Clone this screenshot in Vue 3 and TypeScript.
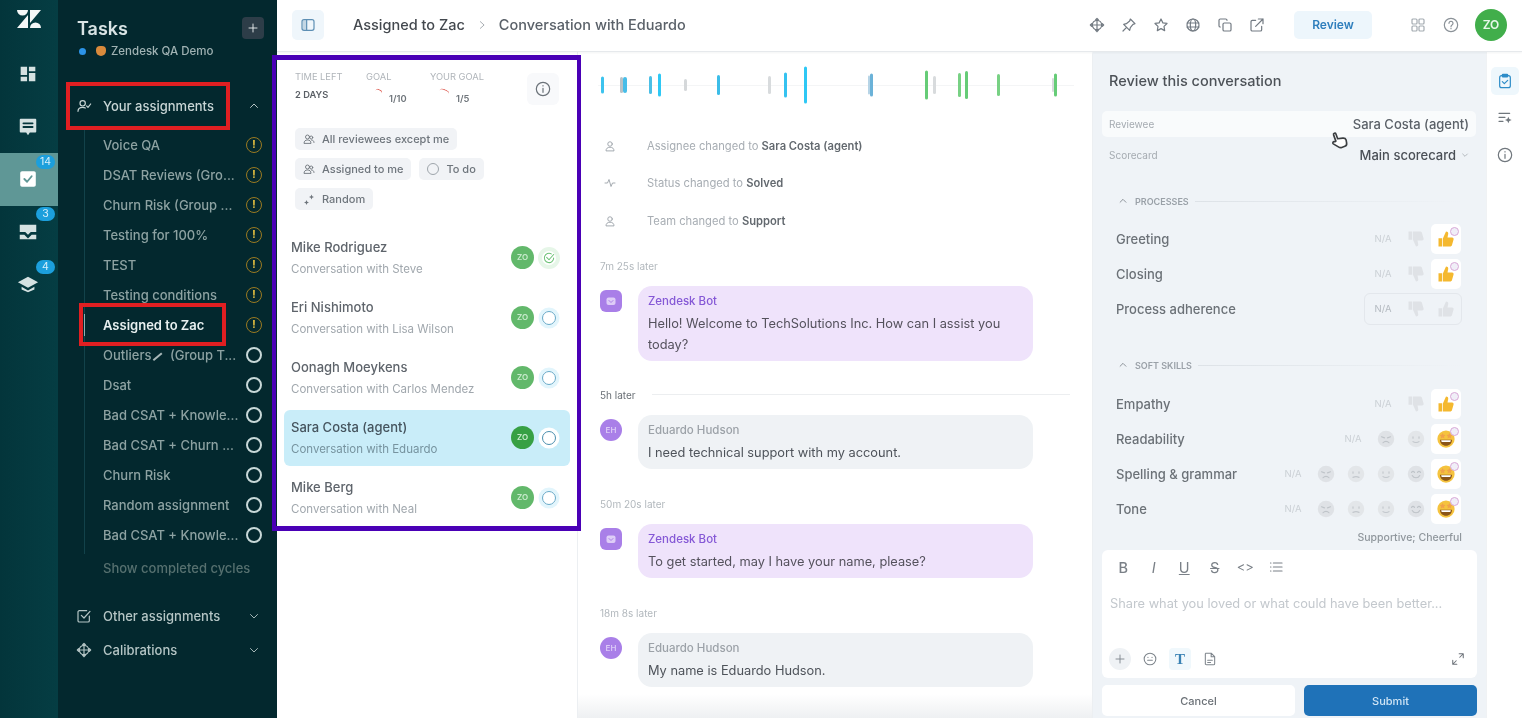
<script setup lang="ts">
const railItems = [
  { icon: 'r-dash', badge: '', active: false },
  { icon: 'r-chat', badge: '', active: false },
  { icon: 'r-task', badge: '14', active: true },
  { icon: 'r-tray', badge: '3', active: false },
  { icon: 'r-cap', badge: '4', active: false },
]

const assignments = [
  { name: 'Voice QA', warn: true },
  { name: 'DSAT Reviews (Gro...', warn: true },
  { name: 'Churn Risk (Group ...', warn: true },
  { name: 'Testing for 100%', warn: true },
  { name: 'TEST', warn: true },
  { name: 'Testing conditions', warn: true },
  { name: 'Assigned to Zac', warn: true, current: true },
  { name: 'Outliers', extra: '(Group T...', warn: false },
  { name: 'Dsat', warn: false },
  { name: 'Bad CSAT + Knowle...', warn: false },
  { name: 'Bad CSAT + Churn ...', warn: false },
  { name: 'Churn Risk', warn: false },
  { name: 'Random assignment', warn: false },
  { name: 'Bad CSAT + Knowle...', warn: false },
]

const reviews = [
  { name: 'Mike Rodriguez', sub: 'Conversation with Steve', done: true },
  { name: 'Eri Nishimoto', sub: 'Conversation with Lisa Wilson' },
  { name: 'Oonagh Moeykens', sub: 'Conversation with Carlos Mendez' },
  { name: 'Sara Costa (agent)', sub: 'Conversation with Eduardo', selected: true },
  { name: 'Mike Berg', sub: 'Conversation with Neal' },
]

const bars = [
  { x: 601, w: 3, h: 17, c: '#3cc3ee' },
  { x: 620, w: 3, h: 16, c: '#b9c2c7' },
  { x: 623, w: 4, h: 16, c: '#47bde8' },
  { x: 649, w: 3, h: 18, c: '#4bbfe6' },
  { x: 658, w: 3, h: 23, c: '#2ec8f5' },
  { x: 684, w: 3, h: 12, c: '#d5d8da' },
  { x: 717, w: 3, h: 20, c: '#3cbde8' },
  { x: 768, w: 3, h: 18, c: '#d8dbdd' },
  { x: 784, w: 3, h: 25, c: '#35c2f0' },
  { x: 804, w: 3, h: 37, c: '#2ec8f5' },
  { x: 868, w: 2, h: 19, c: '#b6d4e6' },
  { x: 870, w: 3, h: 23, c: '#6bb2d8' },
  { x: 925, w: 3, h: 29, c: '#66cc77' },
  { x: 933, w: 3, h: 18, c: '#d8dbdd' },
  { x: 958, w: 3, h: 24, c: '#78d184' },
  { x: 965, w: 3, h: 28, c: '#66cc77' },
  { x: 997, w: 3, h: 22, c: '#78d184' },
  { x: 1052, w: 2, h: 14, c: '#d8dbdd' },
  { x: 1054, w: 3, h: 23, c: '#66cc77' },
]

const messages = [
  { gap: '7m 25s later', bot: true, text: 'Hello! Welcome to TechSolutions Inc. How can I assist you today?' },
  { gap: '5h later', strong: true, bot: false, text: 'I need technical support with my account.' },
  { gap: '50m 20s later', bot: true, text: 'To get started, may I have your name, please?' },
  { gap: '18m 8s later', bot: false, text: 'My name is Eduardo Hudson.' },
]

const processRows = [
  { name: 'Greeting' },
  { name: 'Closing' },
  { name: 'Process adherence', open: true },
]

const softRows = [
  { name: 'Empathy', faces: [] as string[], thumb: true },
  { name: 'Readability', faces: ['f-sad', 'f-ok'] },
  { name: 'Spelling & grammar', faces: ['f-sad', 'f-meh', 'f-ok', 'f-wink'] },
  { name: 'Tone', faces: ['f-sad', 'f-meh', 'f-ok', 'f-wink'] },
]

const topIcons = ['i-target', 'i-pin', 'i-star', 'i-globe', 'i-copy', 'i-out']
</script>

<template>
  <div class="screen">
    <svg class="defs" aria-hidden="true">
      <symbol id="logo" viewBox="0 0 24 18">
        <path d="M0 0H11A5.5 5.5 0 0 1 0 0ZM13 0H24L13 13ZM11 5V18H0ZM13 18A5.5 5.5 0 0 1 24 18Z" fill="currentColor" />
      </symbol>
      <symbol id="r-dash" viewBox="0 0 24 24">
        <path d="M4 4h7v9H4zM13 4h7v5h-7zM13 11h7v9h-7zM4 15h7v5H4z" fill="currentColor" />
      </symbol>
      <symbol id="r-chat" viewBox="0 0 24 24">
        <path d="M4 3h16a1 1 0 0 1 1 1v13a1 1 0 0 1-1 1h-6l-2 3-2-3H4a1 1 0 0 1-1-1V4a1 1 0 0 1 1-1z" fill="currentColor" />
        <path d="M7 8h10M7 12h10" stroke="#04363c" stroke-width="2" fill="none" />
      </symbol>
      <symbol id="r-task" viewBox="0 0 24 24">
        <rect x="3.500" y="3.500" width="17" height="17" rx="2" fill="#fff" />
        <path d="M8 12l3 3 5-6" stroke="#5f9796" stroke-width="2" fill="none" />
      </symbol>
      <symbol id="r-tray" viewBox="0 0 24 24">
        <path d="M3 4h18v8h-6l-3 3-3-3H3zM3 15h5l4 4 4-4h5v5H3z" fill="currentColor" />
      </symbol>
      <symbol id="r-cap" viewBox="0 0 24 24">
        <path d="M12 4L1 10l11 6 11-6zM5 15v3l7 3 7-3v-3l-7 4z" fill="currentColor" />
      </symbol>
      <symbol id="i-assign" viewBox="0 0 24 24">
        <circle cx="10" cy="8" r="4" />
        <path d="M3 20c0-4 3-6 7-6 2 0 3 .4 4 1M16 12l2 2 4-5" />
      </symbol>
      <symbol id="i-check-box" viewBox="0 0 24 24">
        <path d="M20 12v7a2 2 0 0 1-2 2H5a2 2 0 0 1-2-2V6a2 2 0 0 1 2-2h11" />
        <path d="M8 11l4 4 9-10" />
      </symbol>
      <symbol id="i-target" viewBox="0 0 24 24">
        <circle cx="12" cy="12" r="7" />
        <path d="M12 2v20M2 12h20M10 4l2-2 2 2M10 20l2 2 2-2M4 10l-2 2 2 2M20 10l2 2-2 2" />
      </symbol>
      <symbol id="i-pin" viewBox="0 0 24 24">
        <path d="M14 3l7 7-3 1-4 5-1 4-9-9 4-1 5-4zM8 16l-5 5" />
      </symbol>
      <symbol id="i-star" viewBox="0 0 24 24">
        <path d="M12 3l2.8 5.8 6.2.9-4.5 4.4 1 6.3-5.500-3-5.500 3 1-6.300L3 9.700l6.200-.9z" />
      </symbol>
      <symbol id="i-globe" viewBox="0 0 24 24">
        <circle cx="12" cy="12" r="9" />
        <ellipse cx="12" cy="12" rx="4" ry="9" />
        <path d="M3 9h18M3 15h18" />
      </symbol>
      <symbol id="i-copy" viewBox="0 0 24 24">
        <rect x="9" y="9" width="12" height="12" rx="2" />
        <path d="M15 5V5a2 2 0 0 0-2-2H5a2 2 0 0 0-2 2v8a2 2 0 0 0 2 2" />
      </symbol>
      <symbol id="i-out" viewBox="0 0 24 24">
        <path d="M19 14v5a2 2 0 0 1-2 2H5a2 2 0 0 1-2-2V7a2 2 0 0 1 2-2h5M14 3h7v7M21 3L10 14" />
      </symbol>
      <symbol id="i-grid" viewBox="0 0 24 24">
        <rect x="3" y="3" width="7.500" height="7.500" rx="1.500" />
        <rect x="13.500" y="3" width="7.500" height="7.500" rx="1.500" />
        <rect x="3" y="13.500" width="7.500" height="7.500" rx="1.500" />
        <rect x="13.500" y="13.500" width="7.500" height="7.500" rx="1.500" />
      </symbol>
      <symbol id="i-help" viewBox="0 0 24 24">
        <circle cx="12" cy="12" r="10" />
        <path d="M9 9.500a3 3 0 1 1 4.500 2.600c-1 .6-1.500 1.200-1.500 2.400M12 17v.5" />
      </symbol>
      <symbol id="i-info" viewBox="0 0 24 24">
        <circle cx="12" cy="12" r="10" />
        <path d="M12 11v6M12 7v.5" />
      </symbol>
      <symbol id="i-panel" viewBox="0 0 24 24">
        <rect x="3" y="4" width="18" height="16" rx="3" />
        <path d="M10 4v16" />
        <path d="M4 5h6v14H4z" fill="currentColor" opacity=".3" stroke="none" />
      </symbol>
      <symbol id="i-people" viewBox="0 0 24 24">
        <circle cx="9" cy="8" r="4" />
        <circle cx="16.500" cy="9" r="3" />
        <path d="M2 20c0-4 3-6 7-6s7 2 7 6zM17 14c3 0 5 2 5 5" />
      </symbol>
      <symbol id="i-spark" viewBox="0 0 24 24">
        <path d="M17 3l1.500 3.500L22 8l-3.500 1.500L17 13l-1.500-3.500L12 8l3.500-1.500zM7 14l1.500 3.500L12 19l-3.500 1.500L7 24l-1.500-3.500L2 19l3.500-1.500z" fill="currentColor" stroke="none" />
      </symbol>
      <symbol id="i-user" viewBox="0 0 24 24">
        <circle cx="12" cy="8" r="4.500" />
        <path d="M4 21c0-4 3-6.500 8-6.500s8 2.500 8 6.500z" />
      </symbol>
      <symbol id="i-pulse" viewBox="0 0 24 24">
        <path d="M2 12h5l3-7 4 14 3-7h5" />
      </symbol>
      <symbol id="i-chev-up" viewBox="0 0 24 24">
        <path d="M5 15l7-7 7 7" />
      </symbol>
      <symbol id="i-chev-down" viewBox="0 0 24 24">
        <path d="M5 9l7 7 7-7" />
      </symbol>
      <symbol id="i-chev-right" viewBox="0 0 24 24">
        <path d="M8 4l9 8-9 8" />
      </symbol>
      <symbol id="i-plus" viewBox="0 0 24 24">
        <path d="M12 4v16M4 12h16" />
      </symbol>
      <symbol id="i-clip" viewBox="0 0 24 24">
        <rect x="4" y="4" width="16" height="18" rx="3" />
        <rect x="8" y="2" width="8" height="4" rx="1" fill="currentColor" />
        <path d="M8 13l3 3 5-5" />
      </symbol>
      <symbol id="i-addlist" viewBox="0 0 24 24">
        <path d="M3 5h16M3 11h9M3 17h6" />
        <path d="M17 10l1.500 3.500L22 15l-3.500 1.500L17 20l-1.500-3.500L12 15l3.500-1.500z" fill="currentColor" stroke="none" />
      </symbol>
      <symbol id="i-smile" viewBox="0 0 24 24">
        <circle cx="12" cy="12" r="10" />
        <path d="M8 14h8M8.500 9v.5M15.500 9v.5" />
      </symbol>
      <symbol id="i-doc" viewBox="0 0 24 24">
        <path d="M5 2h9l6 6v12a2 2 0 0 1-2 2H6a2 2 0 0 1-2-2V3zM14 2v6h6M8 14h8M8 18h5" />
      </symbol>
      <symbol id="i-list" viewBox="0 0 24 24">
        <path d="M7 5h15M7 12h15M7 19h15M2 5h1M2 12h1M2 19h1" />
      </symbol>
      <symbol id="i-expand" viewBox="0 0 24 24">
        <path d="M14 3h7v7M21 3l-6 6" />
        <path d="M3 14v7h7M3 21l6-6" />
      </symbol>
      <symbol id="i-bot" viewBox="0 0 24 24">
        <rect x="3" y="5" width="18" height="15" rx="4" fill="currentColor" opacity=".75" />
        <path d="M8 11l4 4 4-4" stroke="#a97fe8" stroke-width="2" fill="none" />
      </symbol>
      <symbol id="thumb-up" viewBox="0 0 24 24" stroke="none">
        <path d="M2 11h5v11H2zM8 11l4-9c2 0 3 1 3 3l-1 5h6c2 0 2.500 1.500 2 3l-2 7c-.4 1.300-1 2-3 2H8z" fill="currentColor" />
      </symbol>
      <symbol id="thumb-down" viewBox="0 0 24 24" stroke="none">
        <path d="M2 2h5v11H2zM8 13l4 9c2 0 3-1 3-3l-1-5h6c2 0 2.500-1.500 2-3l-2-7c-.4-1.300-1-2-3-2H8z" fill="currentColor" />
      </symbol>
      <symbol id="f-sad" viewBox="0 0 24 24" stroke="none">
        <circle cx="12" cy="12" r="11" fill="#dfe2e6" />
        <path d="M6 9l4 1.500M18 9l-4 1.500M8 17c2-2.500 6-2.500 8 0" stroke="#bfc4c9" stroke-width="1.500" fill="none" />
      </symbol>
      <symbol id="f-meh" viewBox="0 0 24 24" stroke="none">
        <circle cx="12" cy="12" r="11" fill="#e3e6e9" />
        <path d="M8 9v2M16 9v2M8 16.500c2-1 6-1 8 0" stroke="#c2c7cc" stroke-width="1.500" fill="none" />
      </symbol>
      <symbol id="f-ok" viewBox="0 0 24 24" stroke="none">
        <circle cx="12" cy="12" r="11" fill="#e3e6e9" />
        <path d="M8 9v2M16 9v2M8 15.500c2 1.500 6 1.500 8 0" stroke="#c2c7cc" stroke-width="1.500" fill="none" />
      </symbol>
      <symbol id="f-wink" viewBox="0 0 24 24" stroke="none">
        <circle cx="12" cy="12" r="11" fill="#dfe2e6" />
        <path d="M6 10c1-2 3-2 4 0M14 10c1-2 3-2 4 0M7 14c2 4 8 4 10 0" stroke="#bfc4c9" stroke-width="1.500" fill="none" />
      </symbol>
      <symbol id="f-star" viewBox="0 0 24 24" stroke="none">
        <circle cx="12" cy="12" r="11.500" fill="#f5c33e" />
        <path d="M4 13h16c0 5-3.500 8-8 8s-8-3-8-8z" fill="#8a5418" />
        <path d="M5.500 13.500h13l-.8 2.500H6.300z" fill="#fff" />
        <path d="M7.500 4l1.200 2.400 2.600.4-1.900 1.800.5 2.600-2.400-1.300-2.400 1.300.5-2.600-1.900-1.800 2.600-.4zM16.500 4l1.200 2.400 2.600.4-1.900 1.800.5 2.600-2.400-1.300-2.400 1.300.5-2.600-1.900-1.800 2.600-.4z" fill="#f0a24a" />
      </symbol>
    </svg>

    <div class="app">
      <nav class="rail">
        <svg class="logo"><use href="#logo" /></svg>
        <div v-for="item in railItems" :key="item.icon" class="rail-item" :class="{ active: item.active }">
          <svg class="rail-ic"><use :href="'#' + item.icon" /></svg>
          <span v-if="item.badge" class="rail-badge">{{ item.badge }}</span>
        </div>
      </nav>

      <aside class="side">
        <div class="side-head">
          <div class="side-title">Tasks</div>
          <button class="side-add"><svg class="ic-12"><use href="#i-plus" /></svg></button>
        </div>
        <div class="side-org">
          <span class="org-dot"></span>
          <span class="org-emoji"></span>
          <span>Zendesk QA Demo</span>
        </div>

        <div class="side-section first">
          <svg class="ic-16"><use href="#i-assign" /></svg>
          <span class="grow">Your assignments</span>
          <svg class="ic-12"><use href="#i-chev-up" /></svg>
        </div>
        <ul class="side-list">
          <li v-for="(a, i) in assignments" :key="i" :class="{ current: a.current }">
            <span class="grow side-name">{{ a.name }}<span v-if="a.extra"> <i class="brush"></i> {{ a.extra }}</span></span>
            <span class="state" :class="a.warn ? 'warn' : 'open'">{{ a.warn ? '!' : '' }}</span>
          </li>
        </ul>
        <div class="side-more">Show completed cycles</div>
        <div class="side-section other">
          <svg class="ic-16"><use href="#i-check-box" /></svg>
          <span class="grow">Other assignments</span>
          <svg class="ic-12"><use href="#i-chev-down" /></svg>
        </div>
        <div class="side-section cal">
          <svg class="ic-16"><use href="#i-target" /></svg>
          <span class="grow">Calibrations</span>
          <svg class="ic-12"><use href="#i-chev-down" /></svg>
        </div>
      </aside>

      <div class="main">
        <header class="top">
          <button class="panel-btn"><svg class="ic-16"><use href="#i-panel" /></svg></button>
          <span class="crumb strong">Assigned to Zac</span>
          <svg class="ic-10 crumb-sep"><use href="#i-chev-right" /></svg>
          <span class="crumb">Conversation with Eduardo</span>
          <div class="top-tools">
            <svg v-for="ic in topIcons" :key="ic" class="ic-16 tool"><use :href="'#' + ic" /></svg>
          </div>
          <button class="review-btn">Review</button>
          <svg class="ic-16 tool grid-ic"><use href="#i-grid" /></svg>
          <svg class="ic-16 tool help-ic"><use href="#i-help" /></svg>
          <span class="me">ZO</span>
        </header>

        <div class="body">
          <section class="list">
            <div class="stats">
              <div class="stat s1"><div class="stat-label">TIME LEFT</div><div class="stat-value">2 DAYS</div></div>
              <div class="stat s2">
                <div class="stat-label">GOAL</div>
                <div class="goal"><i class="arc small"></i><span>1/10</span></div>
              </div>
              <div class="stat s3">
                <div class="stat-label">YOUR GOAL</div>
                <div class="goal"><i class="arc"></i><span>1/5</span></div>
              </div>
              <button class="info-btn"><svg class="ic-16"><use href="#i-info" /></svg></button>
            </div>
            <div class="chips">
              <span class="chip"><svg class="ic-12"><use href="#i-people" /></svg>All reviewees except me</span>
              <span class="chip"><svg class="ic-12"><use href="#i-people" /></svg>Assigned to me</span>
              <span class="chip"><i class="chip-ring"></i>To do</span>
              <span class="chip"><svg class="ic-12"><use href="#i-spark" /></svg>Random</span>
            </div>
            <div class="rows">
              <div v-for="r in reviews" :key="r.name" class="row" :class="{ selected: r.selected }">
                <div class="grow">
                  <div class="row-name">{{ r.name }}</div>
                  <div class="row-sub">{{ r.sub }}</div>
                </div>
                <span class="row-av">ZO</span>
                <span class="row-state" :class="{ done: r.done }">
                  <svg v-if="r.done" viewBox="0 0 24 24" class="ic-14">
                    <path d="M20 12a8 8 0 1 1-4-7M8 11l4 4 8-9" />
                  </svg>
                </span>
              </div>
            </div>
          </section>

          <section class="convo">
            <div class="timeline">
              <i v-for="b in bars" :key="b.x" class="bar" :style="{ left: b.x - 578 + 'px', width: b.w + 'px', height: b.h + 'px', background: b.c }"></i>
            </div>
            <div class="event"><svg class="ic-12"><use href="#i-user" /></svg><span>Assignee changed to <b>Sara Costa (agent)</b></span></div>
            <div class="event"><svg class="ic-12"><use href="#i-pulse" /></svg><span>Status changed to <b>Solved</b></span></div>
            <div class="event"><svg class="ic-12"><use href="#i-user" /></svg><span>Team changed to <b>Support</b></span></div>

            <template v-for="m in messages" :key="m.gap">
              <div class="gap" :class="{ strong: m.strong }"><span>{{ m.gap }}</span><i v-if="m.strong"></i></div>
              <div class="msg">
                <span v-if="m.bot" class="av bot"><svg class="ic-12"><use href="#i-bot" /></svg></span>
                <span v-else class="av">EH</span>
                <div class="bubble" :class="{ bot: m.bot }">
                  <div class="who">{{ m.bot ? 'Zendesk Bot' : 'Eduardo Hudson' }}</div>
                  <div class="said">{{ m.text }}</div>
                </div>
              </div>
            </template>
          </section>

          <section class="review">
            <h2>Review this conversation</h2>
            <div class="meta hl"><span>Reviewee</span><b>Sara Costa (agent)</b></div>
            <div class="meta"><span>Scorecard</span><b class="score">Main scorecard <svg class="ic-8"><use href="#i-chev-down" /></svg></b></div>

            <div class="cat"><svg class="ic-10"><use href="#i-chev-up" /></svg><span>PROCESSES</span><i></i></div>
            <div v-for="p in processRows" :key="p.name" class="rate">
              <span class="rate-name">{{ p.name }}</span>
              <div class="cells" :class="{ outline: p.open }">
                <span class="na">N/A</span>
                <span class="cell"><svg class="ic-18 grey"><use href="#thumb-down" /></svg></span>
                <span class="cell" :class="{ picked: !p.open }">
                  <svg class="ic-18" :class="p.open ? 'grey' : 'gold'"><use href="#thumb-up" /></svg>
                  <i v-if="!p.open" class="mark"></i>
                </span>
              </div>
            </div>

            <div class="cat soft"><svg class="ic-10"><use href="#i-chev-up" /></svg><span>SOFT SKILLS</span><i></i></div>
            <div v-for="s in softRows" :key="s.name" class="rate">
              <span class="rate-name">{{ s.name }}</span>
              <div class="cells">
                <span class="na">N/A</span>
                <template v-if="s.thumb">
                  <span class="cell"><svg class="ic-18 grey"><use href="#thumb-down" /></svg></span>
                  <span class="cell picked"><svg class="ic-18 gold"><use href="#thumb-up" /></svg><i class="mark"></i></span>
                </template>
                <template v-else>
                  <span v-for="(f, i) in s.faces" :key="i" class="cell"><svg class="ic-18"><use :href="'#' + f" /></svg></span>
                  <span class="cell picked"><svg class="ic-18"><use href="#f-star" /></svg><i class="mark"></i></span>
                </template>
              </div>
            </div>
            <div class="tags">Supportive; Cheerful</div>

            <div class="editor">
              <div class="fmt">
                <b>B</b><em>I</em><u>U</u><s>S</s><span class="code">&lt;&gt;</span>
                <svg class="ic-14"><use href="#i-list" /></svg>
              </div>
              <div class="placeholder">Share what you loved or what could have been better...</div>
              <div class="ed-foot">
                <span class="ed-plus"><svg class="ic-12"><use href="#i-plus" /></svg></span>
                <svg class="ic-14 ed-smile"><use href="#i-smile" /></svg>
                <span class="ed-t">T</span>
                <svg class="ic-14"><use href="#i-doc" /></svg>
                <svg class="ic-14 ed-exp"><use href="#i-expand" /></svg>
              </div>
            </div>
            <div class="actions">
              <button class="cancel">Cancel</button>
              <button class="submit">Submit</button>
            </div>
          </section>

          <aside class="tabs">
            <span class="tab on"><svg class="ic-16"><use href="#i-clip" /></svg></span>
            <span class="tab"><svg class="ic-16"><use href="#i-addlist" /></svg></span>
            <span class="tab"><svg class="ic-16"><use href="#i-info" /></svg></span>
          </aside>
        </div>
      </div>

      <svg class="hand" viewBox="0 0 24 24">
        <path d="M8 12V4a1.500 1.500 0 0 1 3 0v6l6 1.500c2 .5 3 1.500 3 3.500l-.5 3c-.3 2-1.500 3.500-3.500 3.500h-4c-1.500 0-2.500-.7-3.500-2L4 14c-1-1.500 1-3 2.500-1.800z" />
      </svg>
    </div>

    <i class="mark-box red one"></i>
    <i class="mark-box red two"></i>
    <i class="mark-box purple"></i>
  </div>
</template>

<style scoped>
.screen {
  position: relative;
  width: 1522px;
  height: 718px;
  overflow: hidden;
  font-family: Inter, "Liberation Sans", sans-serif;
}
.defs {
  position: absolute;
  width: 0;
  height: 0;
}
.app {
  display: flex;
  height: 100%;
  filter: blur(0.6px);
}
svg {
  fill: none;
  stroke: currentColor;
  stroke-width: 1.8;
  stroke-linecap: round;
  stroke-linejoin: round;
  flex: none;
}
.ic-8 { width: 8px; height: 8px; }
.ic-10 { width: 10px; height: 10px; }
.ic-12 { width: 12px; height: 12px; }
.ic-14 { width: 14px; height: 14px; }
.ic-16 { width: 16px; height: 16px; }
.ic-18 { width: 18px; height: 18px; }
.grow { flex: 1; min-width: 0; }

/* left rail */
.rail {
  width: 58px;
  flex: none;
  background: linear-gradient(90deg, #03353b, #053d43);
  color: #dfe8e8;
  display: flex;
  flex-direction: column;
}
.logo {
  width: 24px;
  height: 18px;
  margin: 10px 0 20px 17px;
  color: #f4f7f7;
  stroke: none;
}
.rail-item {
  position: relative;
  height: 52.5px;
  padding-right: 2px;
  box-sizing: border-box;
  display: flex;
  align-items: center;
  justify-content: center;
}
.rail-item.active { background: #5f9796; }
.rail-ic { width: 22px; height: 22px; stroke: none; color: #d5e2e2; }
.rail-badge {
  position: absolute;
  top: 1.500px;
  left: 36px;
  min-width: 19px;
  height: 14px;
  border-radius: 8px;
  background: #1c9fdc;
  color: #d8f0fb;
  font-size: 10.500px;
  line-height: 14px;
  text-align: center;
}

/* sidebar */
.side {
  width: 219px;
  flex: none;
  background: #03282e;
  color: #8da2a2;
  font-size: 13px;
  font-weight: 500;
  box-sizing: border-box;
  padding: 0 15px 0 19px;
}
.side-head {
  display: flex;
  align-items: center;
  justify-content: space-between;
  height: 22px;
  padding-top: 17px;
}
.side-title { font-size: 18px; font-weight: 600; color: #d9e4e5; }
.side-add {
  width: 22px;
  height: 22px;
  border: 0;
  border-radius: 4px;
  background: #2d3d48;
  color: #f0f4f5;
  display: flex;
  align-items: center;
  justify-content: center;
  padding: 0;
  margin-right: -2px;
}
.side-org {
  display: flex;
  align-items: center;
  gap: 5px;
  margin-top: 5px;
  height: 14px;
  font-size: 11.500px;
  font-weight: 500;
  color: #a0b2b3;
}
.org-dot { width: 7px; height: 7px; border-radius: 50%; background: #2c93e8; margin: 0 5px 0 2px; }
.org-emoji { width: 10px; height: 10px; border-radius: 40% 40% 50% 50%; background: #d98a3c; }
.side-section {
  display: flex;
  align-items: center;
  height: 24px;
  margin-left: -1px;
  color: #b5c5c5;
  font-weight: 500;
}
.side-section > svg:first-child { margin-right: 11px; }
.side-section > svg:last-child { margin-right: 2px; }
.side-section.first { margin-top: 36px; color: #c8d5d5; }
.side-section.other { margin-top: 28px; }
.side-section.cal { margin-top: 10px; }
.side-list {
  list-style: none;
  margin: 8px 0 0 7px;
  padding: 4px 0 4px 18px;
  border-left: 1px solid #12424a;
  width: 159px;
}
.side-list li {
  display: flex;
  align-items: center;
  height: 30px;
  position: relative;
}
.side-list li.current { color: #e8f0f0; font-weight: 600; }
.side-list li.current::before {
  content: "";
  position: absolute;
  left: -19px;
  top: 4px;
  bottom: 4px;
  width: 1px;
  background: #8fb0b3;
}
.side-name { white-space: nowrap; overflow: hidden; }
.brush {
  display: inline-block;
  width: 11px;
  height: 2px;
  margin: 0 1px 0 3px;
  background: #a7b7b8;
  transform: rotate(-40deg) translateY(-3px);
}
.state {
  width: 16px;
  height: 16px;
  box-sizing: border-box;
  border-radius: 50%;
  flex: none;
  font-size: 10px;
  font-weight: 700;
  line-height: 13px;
  text-align: center;
}
.state.warn { border: 1.500px solid #9a7a22; color: #f1c842; }
.state.open { border: 2px solid #c8d8d8; }
.side-more { margin: 6px 0 0 26px; color: #56706f; font-weight: 500; height: 16px; line-height: 16px; }

/* main column */
.main { flex: 1; min-width: 0; display: flex; flex-direction: column; background: #fff; }
.top {
  height: 52px;
  flex: none;
  box-sizing: border-box;
  border-bottom: 1px solid #e6e9ec;
  display: flex;
  align-items: center;
  padding: 0 0 2px 15px;
  box-shadow: 0 1px 2px rgba(20, 30, 40, 0.05);
  position: relative;
}
.panel-btn {
  width: 32px;
  height: 30px;
  border: 0;
  border-radius: 5px;
  background: #eff6fb;
  color: #5d8fb4;
  display: flex;
  align-items: center;
  justify-content: center;
  padding: 0;
  margin-right: 29px;
}
.crumb { font-size: 14.500px; font-weight: 500; color: #5a6169; }
.crumb.strong { color: #43484e; }
.crumb-sep { margin: 0 12px 0 12px; color: #8b9299; }
.top-tools { display: flex; gap: 16px; margin-left: auto; color: #737b83; }
.review-btn {
  width: 78px;
  height: 28px;
  border: 0;
  border-radius: 5px;
  background: #edf6fc;
  color: #2f7fbd;
  font: 600 12px Inter, sans-serif;
  margin: 0 38px 0 29px;
  padding: 0;
}
.tool { color: #737b83; }
.grid-ic { color: #a4abb1; margin-right: 17px; }
.help-ic { color: #8b9298; margin-right: 16px; }
.me {
  width: 32px;
  height: 32px;
  border-radius: 50%;
  background: #41ae4b;
  color: #e8f7ea;
  font-size: 12px;
  font-weight: 600;
  line-height: 32px;
  text-align: center;
  margin-right: 15px;
}
.body { flex: 1; min-height: 0; display: flex; }

/* review list */
.list {
  width: 301px;
  flex: none;
  box-sizing: border-box;
  border-right: 1px solid #eceff2;
}
.stats { position: relative; height: 56px; padding-top: 20px; box-sizing: border-box; display: flex; }
.stat { font-size: 9.300px; }
.stat.s1 { margin-left: 18px; width: 71px; }
.stat.s2 { width: 64px; }
.stat-label { color: #b0b5ba; height: 10px; line-height: 10px; }
.stat-value { color: #5a5f65; font-weight: 600; margin-top: 8px; line-height: 10px; }
.goal { display: flex; align-items: flex-start; color: #6f757b; font-weight: 600; margin-top: 6px; padding-left: 9px; height: 14px; }
.goal span { margin: 5px 0 0 7px; }
.arc { width: 10px; height: 5px; border-top: 1.500px solid #e0665c; border-radius: 50% 50% 0 0; transform: rotate(22deg); margin-top: 1px; }
.arc.small { width: 7px; }
.info-btn {
  position: absolute;
  left: 250px;
  top: 21px;
  width: 32px;
  height: 32px;
  border: 0;
  border-radius: 6px;
  background: #f8f9fb;
  color: #6b7279;
  display: flex;
  align-items: center;
  justify-content: center;
  padding: 0;
}
.chips {
  display: flex;
  flex-wrap: wrap;
  gap: 8px;
  width: 200px;
  margin: 20px 0 0 18px;
}
.chip {
  display: inline-flex;
  align-items: center;
  gap: 7px;
  height: 22px;
  padding: 0 8px;
  border-radius: 5px;
  background: #f1f3f6;
  color: #6e757c;
  font-size: 11px;
  font-weight: 500;
  white-space: nowrap;
}
.chip-ring { width: 10px; height: 10px; border: 1px solid #9ea5ab; border-radius: 50%; }
.rows { margin-top: 20px; padding-left: 7px; }
.row {
  width: 286px;
  height: 56px;
  margin-bottom: 4px;
  box-sizing: border-box;
  padding: 10px 14px 0 7px;
  border-radius: 6px;
  display: flex;
}
.row.selected { background: #c9edf9; }
.row-name { font-size: 13px; font-weight: 500; color: #5e646b; line-height: 14px; }
.row-sub { font-size: 11.500px; color: #a0a7ad; line-height: 13px; margin-top: 9px; }
.selected .row-name { color: #45545e; }
.selected .row-sub { color: #76939f; }
.row-av {
  width: 23px;
  height: 23px;
  margin-top: 6px;
  border-radius: 50%;
  background: #62b86b;
  color: #cbeccf;
  font-size: 8px;
  font-weight: 600;
  line-height: 23px;
  text-align: center;
}
.selected .row-av { background: #37a044; }
.row-state {
  width: 14px;
  height: 14px;
  box-sizing: border-box;
  margin: 10.500px 0 0 8px;
  border: 1.500px solid #66a9c8;
  border-radius: 50%;
  box-shadow: 0 0 0 3.500px #e2f5fc;
  display: flex;
  align-items: center;
  justify-content: center;
}
.selected .row-state { border-color: #4b8fae; box-shadow: 0 0 0 3.500px #fff; background: #fff; }
.row-state.done { border: 0; box-shadow: 0 0 0 4px #e6f6e8; color: #6cc276; }

/* conversation */
.convo {
  position: relative;
  width: 515px;
  flex: none;
  box-sizing: border-box;
  padding-left: 22px;
  border-right: 1px solid #eceff2;
  overflow: hidden;
}
.convo::after {
  content: "";
  position: absolute;
  left: 0;
  right: 0;
  bottom: 0;
  height: 24px;
  background: linear-gradient(rgba(240, 241, 243, 0), #eef0f2);
}
.timeline { position: relative; height: 75px; margin-left: -22px; }
.timeline::before {
  content: "";
  position: absolute;
  left: 20px;
  right: 18px;
  top: 33px;
  height: 1px;
  background: #f4f5f6;
}
.bar { position: absolute; top: 33px; transform: translateY(-50%); border-radius: 2px; }
.event {
  height: 37.500px;
  display: flex;
  align-items: center;
  font-size: 11.200px;
  color: #a7adb3;
}
.event svg { margin: 0 31px 0 4px; color: #9ba2a8; }
.event b { font-weight: 600; color: #63696f; }
.gap {
  display: flex;
  align-items: center;
  gap: 16px;
  height: 12px;
  margin-top: 28.500px;
  font-size: 10px;
  color: #b2b8bd;
  line-height: 12px;
}
.event + .gap { margin-top: 20px; }
.gap.strong { color: #6a7076; margin-top: 27.500px; }
.gap i { flex: 1; height: 1px; background: #eceef0; margin-right: 22px; }
.msg { display: flex; margin-top: 14.500px; }
.av {
  width: 22px;
  height: 22px;
  margin: 4px 16px 0 0;
  border-radius: 50%;
  background: #a97fe8;
  color: #dccbf6;
  font-size: 8px;
  font-weight: 600;
  line-height: 22px;
  text-align: center;
  display: flex;
  align-items: center;
  justify-content: center;
  flex: none;
}
.av.bot { border-radius: 6px; color: #f0e7fc; }
.av.bot svg { stroke: none; }
.bubble {
  width: 395px;
  box-sizing: border-box;
  padding: 9px 16px 6.500px 10px;
  border-radius: 14px;
  background: #eff2f5;
  color: #4e535a;
}
.bubble.bot { background: #efe3fb; color: #54515c; }
.who { font-size: 11.500px; line-height: 12px; font-weight: 500; color: #9ca2a8; }
.bubble.bot .who { color: #8558d6; }
.said { font-size: 12.800px; line-height: 21px; margin-top: 5.500px; font-weight: 400; }

/* review panel */
.review {
  width: 393px;
  flex: none;
  box-sizing: border-box;
  background: #eff3f7;
  padding: 20px 9px 0 9px;
}
.review h2 {
  margin: 0 0 0 7px;
  font-size: 14.500px;
  font-weight: 500;
  line-height: 18px;
  color: #4d5258;
}
.meta {
  display: flex;
  align-items: center;
  justify-content: space-between;
  height: 26px;
  padding: 0 7px;
  font-size: 10px;
  color: #a5abb1;
  border-radius: 5px;
  margin-right: 1px;
}
.meta.hl { background: #f9fbfc; margin-top: 21px; margin-bottom: 5px; }
.meta b { font-size: 13px; font-weight: 500; color: #5b6168; }
.score { display: flex; align-items: center; gap: 5px; color: #4a4f56 !important; }
.score svg { color: #8b9298; }
.cat {
  display: flex;
  align-items: center;
  gap: 6px;
  height: 14px;
  margin: 26px 15px 13px 16px;
  font-size: 9px;
  font-weight: 600;
  color: #9aa1a8;
}
.cat svg { color: #6d747b; margin-right: 1px; }
.cat i { flex: 1; height: 1px; background: linear-gradient(90deg, #dde2e7, #eff3f7); }
.cat.soft { margin-top: 32px; margin-bottom: 14px; }
.rate {
  display: flex;
  align-items: center;
  justify-content: space-between;
  height: 35px;
  padding: 0 15px 0 14px;
}
.rate-name { font-size: 13px; font-weight: 500; color: #6b7177; }
.cells {
  display: flex;
  align-items: center;
  height: 30px;
  box-sizing: content-box;
  border: 1px solid transparent;
  border-radius: 6px;
}
.cells.outline { border-color: #e3e7ec; }
.na { width: 36px; text-align: center; font-size: 9.500px; color: #cbd0d5; }
.outline .na { color: #b4bac0; }
.cell {
  position: relative;
  width: 30px;
  height: 30px;
  display: flex;
  align-items: center;
  justify-content: center;
  border-radius: 5px;
}
.cell.picked { background: #fff; }
.grey { color: #dfe2e6; stroke: none; }
.gold { color: #f4b82f; stroke: none; }
.mark {
  position: absolute;
  top: 3px;
  right: 2px;
  width: 7px;
  height: 7px;
  border-radius: 50%;
  border: 1px solid #d9a9d8;
  background: #f0eef7;
}
.tags {
  margin: 5px 15px 0 0;
  height: 14px;
  line-height: 14px;
  font-size: 10.500px;
  font-weight: 500;
  text-align: right;
  color: #8f969c;
}
.editor {
  height: 128px;
  box-sizing: border-box;
  margin: 5px 0 0;
  background: #fff;
  border-radius: 6px;
  padding: 9px 9px 0 8px;
  position: relative;
}
.fmt {
  display: flex;
  align-items: center;
  height: 16px;
  color: #7a8087;
  font-size: 14.500px;
  margin-left: -2px;
}
.fmt > * { width: 30.500px; font-weight: 400; text-align: center; text-decoration-thickness: 1px; flex: none; }
.fmt b { font-weight: 500; }
.fmt .code { font-size: 13px; }
.placeholder { margin-top: 21px; font-size: 12.800px; line-height: 16px; color: #c3c8cd; }
.ed-foot {
  position: absolute;
  left: 7px;
  right: 12px;
  top: 98px;
  height: 22px;
  display: flex;
  align-items: center;
  color: #7e858c;
}
.ed-plus {
  width: 22px;
  height: 22px;
  border-radius: 50%;
  background: #eff2f5;
  display: flex;
  align-items: center;
  justify-content: center;
}
.ed-smile { margin: 0 12px; }
.ed-t {
  width: 22px;
  height: 22px;
  margin-right: 12px;
  border-radius: 4px;
  background: #f0f8fc;
  color: #3a82b4;
  font: 700 15px/22px "Liberation Serif", serif;
  text-align: center;
}
.ed-exp { margin-left: auto; color: #6c7279; }
.actions { display: flex; gap: 9px; margin-top: 7px; }
.actions button {
  height: 31px;
  border: 0;
  border-radius: 5px;
  padding: 0;
  font: 500 11px Inter, sans-serif;
}
.cancel { width: 193px; background: #fff; color: #6b7177; }
.submit { width: 173px; background: #1f72b8; color: #cfe4f5; }

/* right tabs */
.tabs { flex: 1; display: flex; flex-direction: column; align-items: center; padding-top: 15px; border-left: 1px solid #f0f2f4; }
.tab {
  width: 28px;
  height: 28px;
  margin-bottom: 9px;
  border-radius: 5px;
  display: flex;
  align-items: center;
  justify-content: center;
  color: #70777d;
}
.tab.on { background: #eef7fc; color: #2d8cc8; }

.hand {
  position: absolute;
  left: 1329px;
  top: 129px;
  width: 20px;
  height: 22px;
  fill: #fff;
  stroke: #3c3f42;
  stroke-width: 2;
  transform: rotate(-20deg);
}

/* annotations drawn on the recording */
.mark-box { position: absolute; box-sizing: border-box; }
.red { border: 4px solid #e01f22; }
.red.one { left: 66px; top: 82px; width: 164px; height: 48px; }
.red.two { left: 79px; top: 303px; width: 147px; height: 43px; }
.purple { left: 272px; top: 55px; width: 309px; height: 476px; border: 4px solid #4a00b6; border-top-width: 5px; border-bottom-width: 5px; }
</style>

<style>
html, body { margin: 0; overflow: hidden; background: #fff; }
</style>
